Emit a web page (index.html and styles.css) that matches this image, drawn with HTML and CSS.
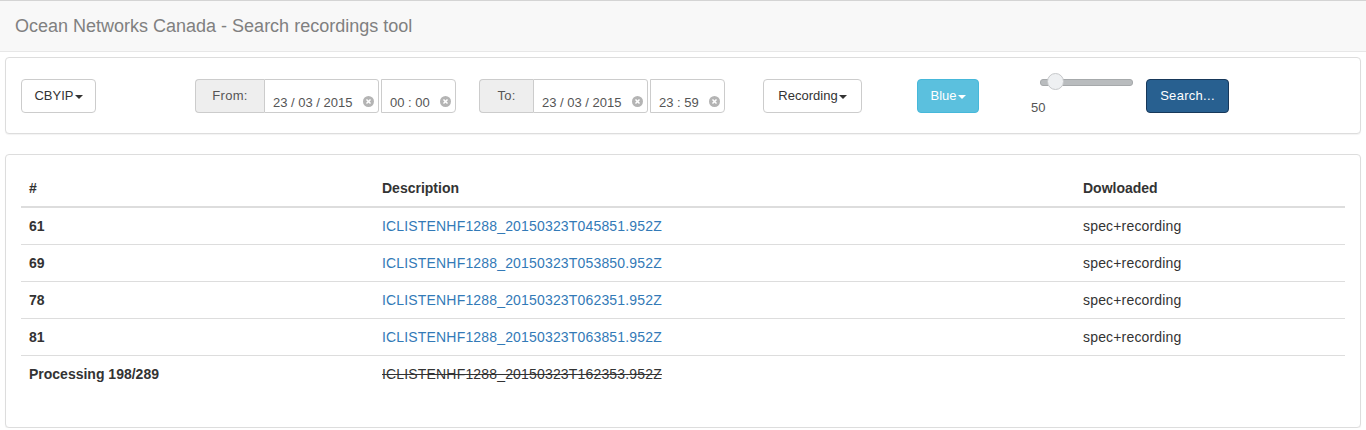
FILE: index.html
```html
<!DOCTYPE html>
<html>
<head>
<meta charset="utf-8">
<title>Ocean Networks Canada - Search recordings tool</title>
<link rel="stylesheet" href="styles.css">
</head>
<body>
<div class="navbar"><span class="brand">Ocean Networks Canada - Search recordings tool</span></div>
<div class="page">
  <div class="panel controls">
    <button class="btn btn-default w-cbyip">CBYIP<span class="caret"></span></button>
    <div class="input-group g-from">
      <span class="addon a-from">From:</span>
      <span class="field f-date">23 / 03 / 2015<svg class="clear" viewBox="0 0 12 12"><circle cx="6" cy="6" r="6" fill="#b4b4b4"/><path d="M3.8 3.8 L8.2 8.2 M8.2 3.8 L3.8 8.2" stroke="#fff" stroke-width="1.6"/></svg></span>
      <span class="field f-time">00 : 00<svg class="clear" viewBox="0 0 12 12"><circle cx="6" cy="6" r="6" fill="#b4b4b4"/><path d="M3.8 3.8 L8.2 8.2 M8.2 3.8 L3.8 8.2" stroke="#fff" stroke-width="1.6"/></svg></span>
    </div>
    <div class="input-group g-to">
      <span class="addon a-to">To:</span>
      <span class="field f-date">23 / 03 / 2015<svg class="clear" viewBox="0 0 12 12"><circle cx="6" cy="6" r="6" fill="#b4b4b4"/><path d="M3.8 3.8 L8.2 8.2 M8.2 3.8 L3.8 8.2" stroke="#fff" stroke-width="1.6"/></svg></span>
      <span class="field f-time">23 : 59<svg class="clear" viewBox="0 0 12 12"><circle cx="6" cy="6" r="6" fill="#b4b4b4"/><path d="M3.8 3.8 L8.2 8.2 M8.2 3.8 L3.8 8.2" stroke="#fff" stroke-width="1.6"/></svg></span>
    </div>
    <button class="btn btn-default w-rec">Recording<span class="caret"></span></button>
    <button class="btn btn-info w-blue">Blue<span class="caret"></span></button>
    <div class="slider-block">
      <div class="slider"><span class="thumb"></span></div>
      <div class="slider-label">50</div>
    </div>
    <button class="btn btn-primary w-search">Search...</button>
  </div>

  <div class="panel results">
    <table class="table">
      <thead>
        <tr><th class="c1">#</th><th class="c2">Description</th><th>Dowloaded</th></tr>
      </thead>
      <tbody>
        <tr><th>61</th><td><a href="#">ICLISTENHF1288_20150323T045851.952Z</a></td><td>spec+recording</td></tr>
        <tr><th>69</th><td><a href="#">ICLISTENHF1288_20150323T053850.952Z</a></td><td>spec+recording</td></tr>
        <tr><th>78</th><td><a href="#">ICLISTENHF1288_20150323T062351.952Z</a></td><td>spec+recording</td></tr>
        <tr><th>81</th><td><a href="#">ICLISTENHF1288_20150323T063851.952Z</a></td><td>spec+recording</td></tr>
        <tr><th>Processing 198/289</th><td><s>ICLISTENHF1288_20150323T162353.952Z</s></td><td></td></tr>
      </tbody>
    </table>
  </div>
</div>
</body>
</html>
```
FILE: styles.css
```css
* { box-sizing: border-box; }
body {
  margin: 0;
  font-family: "Liberation Sans", Arial, sans-serif;
  font-size: 14px;
  line-height: 20px;
  color: #333;
  background: #fff;
}
.navbar {
  height: 52px;
  background: #f8f8f8;
  border-top: 1px solid #d4d4d4;
  border-bottom: 1px solid #e7e7e7;
  padding-left: 15px;
  display: flex;
  align-items: center;
}
.brand {
  font-size: 18px;
  color: #808080;
  line-height: 20px;
}
.page { padding: 0 5px; margin-top: 5px; }
.panel {
  background: #fff;
  border: 1px solid #ddd;
  border-radius: 4px;
  box-shadow: 0 1px 1px rgba(0,0,0,.05);
}
.controls {
  display: flex;
  align-items: flex-start;
  padding: 21px 15px 20px;
}
.btn {
  font-family: inherit;
  font-size: 13px;
  line-height: 20px;
  height: 34px;
  padding: 6px 0;
  border: 1px solid #ccc;
  border-radius: 4px;
  background: #fff;
  color: #333;
  text-align: center;
  margin: 0;
}
.caret {
  display: inline-block;
  width: 0; height: 0;
  margin-left: 1px;
  vertical-align: middle;
  border-top: 4px solid;
  border-left: 4px solid transparent;
  border-right: 4px solid transparent;
}
.btn-info { background: #5bc0de; border-color: #46b8da; color: #fff; }
.btn-primary { background: #286090; border-color: #17385a; color: #fff; letter-spacing: 0.3px; }
.w-cbyip { width: 75px; }
.w-rec { width: 99px; margin-left: 38px; }
.w-blue { width: 62px; margin-left: 55px; }
.w-search { width: 83px; margin-left: 13px; }

.input-group { display: flex; height: 34px; font-size: 13px; }
.g-from { margin-left: 99px; }
.g-to { margin-left: 23px; }
.addon {
  background: #eee;
  border: 1px solid #ccc;
  border-right: 0;
  border-radius: 4px 0 0 4px;
  color: #555;
  text-align: center;
  line-height: 32px;
  letter-spacing: 0.3px;
}
.a-from { width: 69px; }
.a-to { width: 54px; }
.field {
  border: 1px solid #ccc;
  display: flex;
  align-items: center;
  justify-content: space-between;
  padding: 14px 4px 0 8px;
  color: #555;
  line-height: 16px;
}
.f-date { width: 115px; border-radius: 0 3px 3px 0; }
.f-time { width: 75px; margin-left: 2px; border-radius: 0 4px 4px 0; }
.clear { width: 11px; height: 11px; margin-top: -4px; flex: none; }

.slider-block {
  margin-left: 52px;
  margin-top: -6px;
  margin-bottom: -6px;
  height: 40px;
  width: 102px;
}
.slider {
  position: relative;
  margin-left: 9px;
  width: 93px;
  height: 17px;
}
.slider::before {
  content: "";
  position: absolute;
  left: 0; right: 0; top: 6px;
  height: 5px;
  background: #b9bcbe;
  border: 1px solid #a6a9ab;
  border-radius: 3px;
}
.thumb {
  position: absolute;
  left: 7px; top: 0;
  width: 17px; height: 17px;
  border-radius: 50%;
  background: #eef0f2;
  border: 1px solid #c6c8ca;
}
.slider-label {
  margin-top: 11px;
  font-size: 13px;
  line-height: 14px;
  color: #555;
}

.results { margin-top: 20px; padding: 15px; }
.table {
  width: 100%;
  border-collapse: collapse;
  margin-bottom: 20px;
}
.table th, .table td {
  padding: 8px;
  line-height: 20px;
  text-align: left;
  vertical-align: top;
  border-top: 1px solid #ddd;
}
.table thead th {
  border-top: 0;
  border-bottom: 2px solid #ddd;
  vertical-align: bottom;
}
.table tbody th { font-weight: bold; }
.table td { font-size: 14px; letter-spacing: 0.17px; }
.c1 { width: 353px; }
.c2 { width: 701px; }
.table a { color: #337ab7; text-decoration: none; }
.table s { color: #333; }
```
